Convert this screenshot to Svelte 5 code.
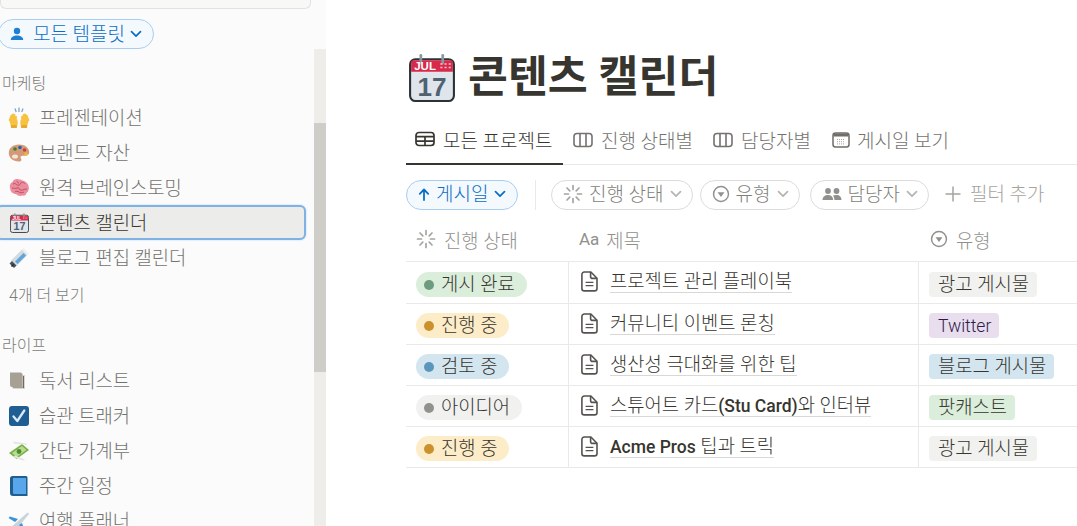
<script>
  const marketing = [
    { icon: 'hands', label: '프레젠테이션' },
    { icon: 'palette', label: '브랜드 자산' },
    { icon: 'brain', label: '원격 브레인스토밍' },
    { icon: 'cal', label: '콘텐츠 캘린더', active: true },
    { icon: 'pen', label: '블로그 편집 캘린더' }
  ];
  const life = [
    { icon: 'books', label: '독서 리스트' },
    { icon: 'check', label: '습관 트래커' },
    { icon: 'money', label: '간단 가계부' },
    { icon: 'book', label: '주간 일정' },
    { icon: 'plane', label: '여행 플래너' }
  ];
  const rows = [
    { status: '게시 완료', s: 'green', title: ['프로젝트 관리 플레이북'], type: '광고 게시물', t: 'gray' },
    { status: '진행 중', s: 'yellow', title: ['커뮤니티 이벤트 론칭'], type: 'Twitter', t: 'purple' },
    { status: '검토 중', s: 'blue', title: ['생산성 극대화를 위한 팁'], type: '블로그 게시물', t: 'blue' },
    { status: '아이디어', s: 'gray', title: ['스튜어트 카드', '(Stu Card)', '와 인터뷰'], type: '팟캐스트', t: 'green' },
    { status: '진행 중', s: 'yellow', title: ['', 'Acme Pros', ' 팁과 트릭'], type: '광고 게시물', t: 'gray' }
  ];
</script>

{#snippet spinner(size)}
  <svg width={size} height={size} viewBox="0 0 20 20" fill="none" stroke="#a5a4a0" stroke-width="1.7" stroke-linecap="round">
    <path d="M10 1.5v4M10 14.5v4M1.5 10h4M14.5 10h4M4 4l2.8 2.8M13.2 13.2 16 16M4 16l2.8-2.8M13.2 6.8 16 4" />
  </svg>
{/snippet}

{#snippet selectIcon(size)}
  <svg width={size} height={size} viewBox="0 0 20 20" fill="none">
    <circle cx="10" cy="10" r="8.3" stroke="#91908c" stroke-width="1.6" />
    <path d="M6.2 8h7.6L10 13.4z" fill="#91908c" />
  </svg>
{/snippet}

{#snippet chevron(color)}
  <svg class="chev" width="12" height="8" viewBox="0 0 12 8" fill="none" stroke={color} stroke-width="1.7" stroke-linecap="round" stroke-linejoin="round">
    <path d="M1.5 1.7 6 6.2l4.5-4.5" />
  </svg>
{/snippet}

{#snippet board()}
  <svg width="20" height="16" viewBox="0 0 20 16" fill="none" stroke="#73726e" stroke-width="1.6">
    <rect x="1" y="1.5" width="18" height="13" rx="3" />
    <path d="M7 1.5v13M13 1.5v13" />
  </svg>
{/snippet}

{#snippet docIcon()}
  <svg class="doc" width="17" height="21" viewBox="0 0 17 21" fill="none" stroke="#55534e" stroke-width="1.6" stroke-linejoin="round">
    <path d="M3.3 1h6.600L16 7.200v10.300a2.400 2.400 0 0 1-2.400 2.400H3.300a2.400 2.400 0 0 1-2.400-2.400V3.400A2.400 2.400 0 0 1 3.300 1z" />
    <path d="M9.600 1v4.400c0 1.300.8 2 2 2H16" />
    <path d="M4.600 11.300h7.800M4.600 14.700h7.800" stroke-width="1.300" />
  </svg>
{/snippet}

{#snippet emoji(name)}
  {#if name === 'hands'}
    <svg width="22" height="22" viewBox="0 0 22 22">
      <g stroke="#f7c23f" stroke-width="2" stroke-linecap="round" fill="none">
        <path d="M1.700 13 3.500 8.500M3.600 13.500 5 7.500M5.500 13.500 6.500 8M7.500 14 8 10" />
        <path d="M20.300 13 18.500 8.500M18.400 13.500 17 7.500M16.500 13.500 15.500 8M14.500 14 14 10" />
      </g>
      <path d="M1 12.500h8.300L9.800 16 8.800 21H3l-.5-3.500zM21 12.500h-8.300L12.200 16l1 5H19l.5-3.500z" fill="#f7c23f" />
      <path d="M3 18h5.800l-.2 3H3zM19 18h-5.800l.2 3H19z" fill="#e8a92f" />
      <path d="M7 1.500 8.200 5M11 .5v4.500M15 1.500 13.800 5" stroke="#7ca6cf" stroke-width="1.300" fill="none" />
    </svg>
  {:else if name === 'palette'}
    <svg width="22" height="20" viewBox="0 0 22 20">
      <path d="M11 1.500C5 1.500.8 5 .8 10c0 4.500 4 8.500 10 8.500 3 0 3-2 2-3.300-.8-1.200.2-2.500 2-2.400 3 .2 6.400-.4 6.400-3.500C21.200 5 17 1.500 11 1.500z" fill="#d39a78" />
      <circle cx="7" cy="6" r="1.800" fill="#3e7d3a" /><circle cx="12" cy="4.500" r="1.800" fill="#2d5fa8" />
      <circle cx="16.500" cy="7" r="1.800" fill="#c6423a" /><circle cx="18" cy="11" r="1.700" fill="#efb92f" />
      <ellipse cx="7" cy="13.500" rx="3" ry="2" fill="#f3e5d8" />
    </svg>
  {:else if name === 'brain'}
    <svg width="21" height="19" viewBox="0 0 21 19">
      <path d="M10 1.500C7 .5 4.500 1.500 3.500 4 1 5 .3 8 1.200 10.500c.2 3 2.400 5.500 5.800 5.500 1.500 2 4.500 2.500 6.500 1.500 2 .5 3.800-.5 4-2.500 2-1.500 3-4.500 2-7-.5-3-3-5-5.500-5.300-1.200-.8-2.700-1.500-4-1.200z" fill="#ea8e9d" />
      <path d="M4 6c2-1 3 0 4 1s3 0 4-2 3 0 4 1M3 10c2 0 3 1 5 0s2 1 3 2 4-1 7-1M6 14c1-1 3-1 4 0s3 1 5 0M8 3c0 1 1 2 2 2" stroke="#c24e67" stroke-width="1" fill="none" />
    </svg>
  {:else if name === 'cal'}
    <svg class="mini-cal" width="19" height="20" viewBox="0 0 44 46">
      <use href="#bigcal" />
    </svg>
  {:else if name === 'pen'}
    <svg width="22" height="22" viewBox="0 0 22 22">
      <path d="M3 13.500 14 2.500l5.500 5.500L8.500 19z" fill="#d5dade" />
      <path d="M7 14.500 15.500 6l2.500 2.500L9.500 17z" fill="#5fa5dd" />
      <path d="M1.500 16.500 4 14l4.500 4.500L6 21z" fill="#4a5259" />
      <path d="M3.500 19.500l2-2" stroke="#20272c" stroke-width="1.500" />
      <path d="M14 2.500l1.500-1.500 5.500 5.500L19.500 8z" fill="#eef0f2" />
    </svg>
  {:else if name === 'books'}
    <svg width="20" height="20" viewBox="0 0 20 20">
      <path d="M3 4h13v14H5a2 2 0 0 1-2-2z" fill="#dbd7cf" />
      <path d="M1 1.500h11l1.500 1.500v13H3a2 2 0 0 1-2-2z" fill="#a7a095" />
      <path d="M14 5h1v12H4v-.5h10z" fill="#6f6a60" />
    </svg>
  {:else if name === 'check'}
    <svg width="20" height="20" viewBox="0 0 20 20">
      <rect width="20" height="20" rx="3" fill="#1f5e93" />
      <path d="M4.500 10.500 8.300 15l7-10.500" fill="none" stroke="#d8eafa" stroke-width="2.300" stroke-linecap="round" stroke-linejoin="round" />
    </svg>
  {:else if name === 'money'}
    <svg width="22" height="22" viewBox="0 0 22 22">
      <path d="M1 13 14 4l7 6-12.500 9z" fill="#78b04a" />
      <path d="M4 13 14 6l4.500 4L8.500 17z" fill="#b8dc8e" />
      <circle cx="11" cy="11.500" r="2.400" fill="#4f8a33" />
      <path d="M5 1.500 18 3.500 19.500 5 6 3.500zM5 17l10 3.500 2-1-10-4z" fill="#e3e5e0" />
    </svg>
  {:else if name === 'book'}
    <svg width="18" height="20" viewBox="0 0 18 20">
      <path d="M2.500 0H16a1.500 1.500 0 0 1 1.500 1.500V20H3a3 3 0 0 1-3-3V2.500A2.500 2.500 0 0 1 2.500 0z" fill="#1e5f8f" />
      <path d="M3 2h13v16H4.500A1.500 1.500 0 0 1 3 16.500z" fill="#5aa6ea" />
    </svg>
  {:else if name === 'plane'}
    <svg width="22" height="22" viewBox="0 0 22 22">
      <path d="M1 19 19 3c1-.8 2.400.6 1.600 1.600L6 22z" fill="#c9d3da" />
      <path d="M10 9 2 6.500l-1.500 1.500L7 12zM14 13l2.500 7L15 21l-4-6z" fill="#3d93d8" />
      <path d="M1 17l3-1 2 2-1 3z" fill="#3d93d8" />
    </svg>
  {/if}
{/snippet}

<div class="page">
  <aside class="sidebar">
    <div class="side-content">
      <div class="search"></div>
      <button class="all-btn">
        <svg width="16" height="16" viewBox="0 0 16 16" fill="#1f7fd1">
          <circle cx="8" cy="5" r="3.200" /><path d="M1.800 14c0-3 2.700-4.600 6.200-4.600s6.200 1.600 6.200 4.600z" />
        </svg>
        <span>모든 템플릿</span>
        {@render chevron('#0b6ec5')}
      </button>

      <div class="section">마케팅</div>
      {#each marketing as item}
        <div class="nav" class:active={item.active}>
          <span class="nav-icon">{@render emoji(item.icon)}</span>
          <span class="nav-label">{item.label}</span>
        </div>
      {/each}
      <div class="more">4개 더 보기</div>

      <div class="section life">라이프</div>
      {#each life as item}
        <div class="nav">
          <span class="nav-icon">{@render emoji(item.icon)}</span>
          <span class="nav-label">{item.label}</span>
        </div>
      {/each}
    </div>
    <div class="scrollbar"><div class="track"><div class="thumb"></div></div></div>
  </aside>

  <main class="main">
    <div class="title-row">
      <svg class="title-icon" width="46" height="48" viewBox="0 0 44 46">
        <defs>
          <g id="bigcal">
            <rect x="1" y="5" width="42" height="40" rx="5" fill="#dfe5eb" stroke="#2a3238" stroke-width="2" />
            <path d="M2 17V8a2 2 0 0 1 2-2h36a2 2 0 0 1 2 2v9z" fill="#d9294a" />
            <rect x="10" y="0" width="2.600" height="10" rx="1.300" fill="#8c979f" />
            <rect x="31" y="0" width="2.600" height="10" rx="1.300" fill="#8c979f" />
            <text x="5" y="15" font-family="Liberation Sans, sans-serif" font-size="11" font-weight="700" fill="#fff">JUL</text>
            <path d="M30 9.500h2M34 9.500h2M38 9.500h2M30 13h2M34 13h2M38 13h2" stroke="#f5c5cf" stroke-width="1.500" />
            <text x="22" y="40" text-anchor="middle" font-family="Liberation Sans, sans-serif" font-size="25" font-weight="700" fill="#4f6272">17</text>
          </g>
        </defs>
        <use href="#bigcal" />
      </svg>
      <h1>콘텐츠 캘린더</h1>
    </div>

    <nav class="tabs">
      <div class="tab current">
        <svg width="20" height="16" viewBox="0 0 20 16" fill="none" stroke="#37352f" stroke-width="1.700">
          <rect x="1" y="1.500" width="18" height="13" rx="3" />
          <path d="M1 5.700h18M1 10.200h18M10 5.700v8.800" />
        </svg>
        <span>모든 프로젝트</span>
      </div>
      <div class="tab">{@render board()}<span>진행 상태별</span></div>
      <div class="tab">{@render board()}<span>담당자별</span></div>
      <div class="tab last">
        <svg width="18" height="16" viewBox="0 0 18 16" fill="none">
          <rect x="1" y="1" width="16" height="14" rx="2.500" stroke="#6f6e69" stroke-width="1.500" />
          <path d="M1.500 3.500a2 2 0 0 1 2-2h11a2 2 0 0 1 2 2v1h-15z" fill="#6f6e69" />
          <path d="M5 7.500h8M5 9.700h8M5 11.900h8" stroke="#a8a7a3" stroke-width="1" stroke-dasharray="1 1" />
        </svg>
        <span>게시일 보기</span>
      </div>
    </nav>

    <div class="filters">
      <button class="pill sort">
        <svg width="12" height="13" viewBox="0 0 12 13" fill="none" stroke="#0b6ec5" stroke-width="1.800" stroke-linecap="round" stroke-linejoin="round">
          <path d="M6 12V1.800M1.800 5.800 6 1.500l4.200 4.300" />
        </svg>
        <span>게시일</span>
        {@render chevron('#0b6ec5')}
      </button>
      <span class="vsep"></span>
      <button class="pill">{@render spinner(20)}<span>진행 상태</span>{@render chevron('#b5b4b0')}</button>
      <button class="pill">{@render selectIcon(18)}<span>유형</span>{@render chevron('#b5b4b0')}</button>
      <button class="pill assignee">
        <svg width="20" height="14" viewBox="0 0 20 14" fill="#91908c">
          <circle cx="6" cy="4" r="2.900" /><circle cx="14.500" cy="4" r="2.900" />
          <path d="M.5 13c0-3 2.400-5 5.500-5s5 1.500 5.200 5zM12.400 13c0-2-.6-3.500-1.600-4.500 1-.4 2.400-.6 3.700-.6 3 0 5 2 5 5.100z" />
        </svg>
        <span>담당자</span>{@render chevron('#b5b4b0')}
      </button>
      <button class="add">
        <svg width="16" height="16" viewBox="0 0 16 16" stroke="#a5a4a0" stroke-width="1.500" fill="none"><path d="M8 .5v15M.5 8h15" /></svg>
        <span>필터 추가</span>
      </button>
    </div>

    <div class="table">
      <div class="row head">
        <div class="cell c1">{@render spinner(20)}<span>진행 상태</span></div>
        <div class="cell c2"><span class="aa">Aa</span><span>제목</span></div>
        <div class="cell c3">{@render selectIcon(18)}<span>유형</span></div>
      </div>
      {#each rows as r}
        <div class="row">
          <div class="cell c1 line">
            <span class="status {r.s}"><i class="dot"></i>{r.status}</span>
          </div>
          <div class="cell c2 line">
            {@render docIcon()}
            <span class="page-title">{#each r.title as part, i}{#if i === 1}<b>{part}</b>{:else}{part}{/if}{/each}</span>
          </div>
          <div class="cell c3">
            <span class="tag {r.t}">{r.type}</span>
          </div>
        </div>
      {/each}
    </div>
  </main>
</div>

<style>
  :global(body) {
    margin: 0;
    background: #fff;
    overflow: hidden;
  }
  .page {
    display: flex;
    width: 1077px;
    height: 526px;
    overflow: hidden;
    font-family: Roboto, "Noto Sans CJK KR", sans-serif;
    font-weight: 300;
    color: #37352f;
  }
  button {
    font: inherit;
    background: none;
    cursor: pointer;
  }

  /* sidebar */
  .sidebar {
    display: flex;
    flex: 0 0 326px;
    background: #fbfbfb;
  }
  .side-content {
    flex: 0 0 314px;
    min-width: 0;
  }
  .search {
    box-sizing: border-box;
    width: 311px;
    height: 9px;
    background: #f8f8f7;
    border: 1px solid #e3e2e0;
    border-top: 0;
    border-radius: 0 0 6px 6px;
  }
  .all-btn {
    display: flex;
    align-items: center;
    box-sizing: border-box;
    height: 30px;
    width: 156px;
    margin: 10px 0 0 -2px;
    padding: 0 0 0 10px;
    background: #f4f9fd;
    border: 1px solid #a9cdf0;
    border-radius: 15px;
    color: #0b6ec5;
    font-size: 19px;
    line-height: 1;
    white-space: nowrap;
  }
  .all-btn span {
    margin: 0 5px 0 8px;
  }
  .section {
    height: 26px;
    line-height: 26px;
    margin: 22px 0 3px 2px;
    font-size: 16px;
    color: #7d7c78;
  }
  .section.life {
    margin: 24px 0 4px 2px;
  }
  .nav {
    display: flex;
    align-items: center;
    box-sizing: border-box;
    height: 35px;
    font-size: 18.800px;
    color: #73726e;
    white-space: nowrap;
  }
  .nav-label {
    padding-bottom: 2px;
  }
  .nav.active {
    margin-left: -4px;
    width: 310px;
    background: #ececeb;
    color: #37352f;
    border: 2px solid #7eb1e4;
    border-radius: 6px;
    box-shadow: 0 0 2px #b4d3f2;
  }
  .nav-icon {
    display: flex;
    justify-content: center;
    align-items: center;
    flex: 0 0 22px;
    margin: 0 9px 0 8px;
  }
  .nav.active .nav-icon {
    margin-left: 10px;
  }
  .more {
    height: 26px;
    line-height: 26px;
    margin: 8px 0 0 9px;
    font-size: 16px;
    color: #7d7c78;
  }
  .scrollbar {
    flex: 0 0 12px;
    padding-top: 49px;
    display: flex;
  }
  .track {
    flex: 1;
    background: #eeedea;
  }
  .thumb {
    height: 249px;
    margin-top: 74px;
    background: #cfcdc8;
  }

  /* main */
  .main {
    flex: 1;
    min-width: 0;
    padding-left: 80px;
  }
  .title-row {
    display: flex;
    align-items: center;
    height: 70px;
    margin-top: 43px;
  }
  .title-icon {
    margin-left: 3px;
    flex: none;
  }
  h1 {
    margin: 0 0 0 13px;
    font-size: 43.400px;
    line-height: 1;
    font-weight: 700;
    color: #37352f;
    white-space: nowrap;
  }
  .tabs {
    display: flex;
    height: 45px;
    margin-top: 7px;
    box-sizing: border-box;
    border-bottom: 1px solid #e9e9e7;
    font-size: 19px;
    color: #73726e;
    white-space: nowrap;
  }
  .tab {
    display: flex;
    align-items: center;
    gap: 8px;
    padding: 0 10px 5px;
    height: 44px;
    box-sizing: border-box;
  }
  .tab.last {
    margin-left: 1px;
    gap: 7px;
  }
  .tab.current {
    width: 157px;
    padding-left: 9px;
    color: #37352f;
    border-bottom: 2px solid #37352f;
    height: 45px;
  }
  .filters {
    display: flex;
    align-items: center;
    gap: 7px;
    height: 30px;
    margin-top: 15px;
    font-size: 19px;
    white-space: nowrap;
  }
  .pill {
    display: flex;
    align-items: center;
    gap: 6px;
    box-sizing: border-box;
    height: 30px;
    padding: 0 10px 2px 11px;
    border: 1px solid #dcdcda;
    border-radius: 15px;
    color: #807f7b;
    line-height: 1;
  }
  .pill.assignee {
    margin-left: 3px;
  }
  .pill.sort {
    background: #f4f9fd;
    border-color: #a9cdf0;
    color: #0b6ec5;
    width: 112px;
  }
  .vsep {
    width: 1px;
    height: 30px;
    margin: 0 8px 0 10px;
    background: #e9e9e7;
  }
  .add {
    display: flex;
    align-items: center;
    gap: 9px;
    margin-left: 9px;
    padding: 0 0 2px;
    border: 0;
    color: #a5a4a0;
    line-height: 1;
  }
  .table {
    margin-top: 11px;
  }
  .row {
    display: grid;
    grid-template-columns: 163px 350px 1fr;
    height: 41px;
    box-sizing: border-box;
    border-bottom: 1px solid #e9e9e7;
  }
  .row.head {
    padding-bottom: 4px;
    font-size: 18.800px;
    color: #91908c;
    white-space: nowrap;
  }
  .row.head + .row {
    height: 42px;
  }
  .cell {
    display: flex;
    align-items: center;
    min-width: 0;
    white-space: nowrap;
  }
  .head .cell {
    gap: 8px;
  }
  .head .c1 {
    padding-left: 10px;
  }
  .head .c2 {
    padding-left: 10px;
    gap: 7px;
  }
  .head .c3 {
    padding-left: 11px;
  }
  .aa {
    font-size: 17px;
    font-weight: 400;
  }
  .line {
    border-right: 1px solid #e9e9e7;
  }
  .row:not(.head) .c1 {
    padding: 3px 0 0 10px;
  }
  .row:not(.head) .c2 {
    padding-left: 12px;
    gap: 12px;
  }
  .row:not(.head) .c3 {
    padding: 3px 0 0 10px;
  }
  .doc {
    margin-top: -2px;
  }
  .status,
  .tag {
    display: inline-flex;
    align-items: center;
    box-sizing: border-box;
    height: 25px;
    padding-top: 2px;
    font-size: 18.800px;
    line-height: 1;
    color: #37352f;
  }
  .status {
    padding-left: 8px;
    padding-right: 12px;
    border-radius: 13px;
  }
  .tag {
    padding-left: 9px;
    padding-right: 8px;
    border-radius: 4px;
  }
  .dot {
    width: 10px;
    height: 10px;
    border-radius: 50%;
    margin: -1px 7px 0 0;
  }
  .status.green { background: #dbeddb; }
  .status.green .dot { background: #6c9b7d; }
  .status.yellow { background: #fdecc8; }
  .status.yellow .dot { background: #cb912f; }
  .status.blue { background: #d3e5ef; }
  .status.blue .dot { background: #5b97bd; }
  .status.gray { background: #f1f1ef; }
  .status.gray .dot { background: #91918e; }
  .tag.gray { background: #f1f1ef; }
  .tag.purple { background: #e8deee; color: #2f1a4a; font-size: 17.500px; }
  .tag.blue { background: #d3e5ef; }
  .tag.green { background: #dbeddb; }
  .page-title {
    font-size: 18.800px;
    line-height: 20px;
    color: #37352f;
    border-bottom: 1px solid #d8d8d6;
  }
  .page-title b {
    font-weight: 500;
    font-size: 17.500px;
  }
</style>
